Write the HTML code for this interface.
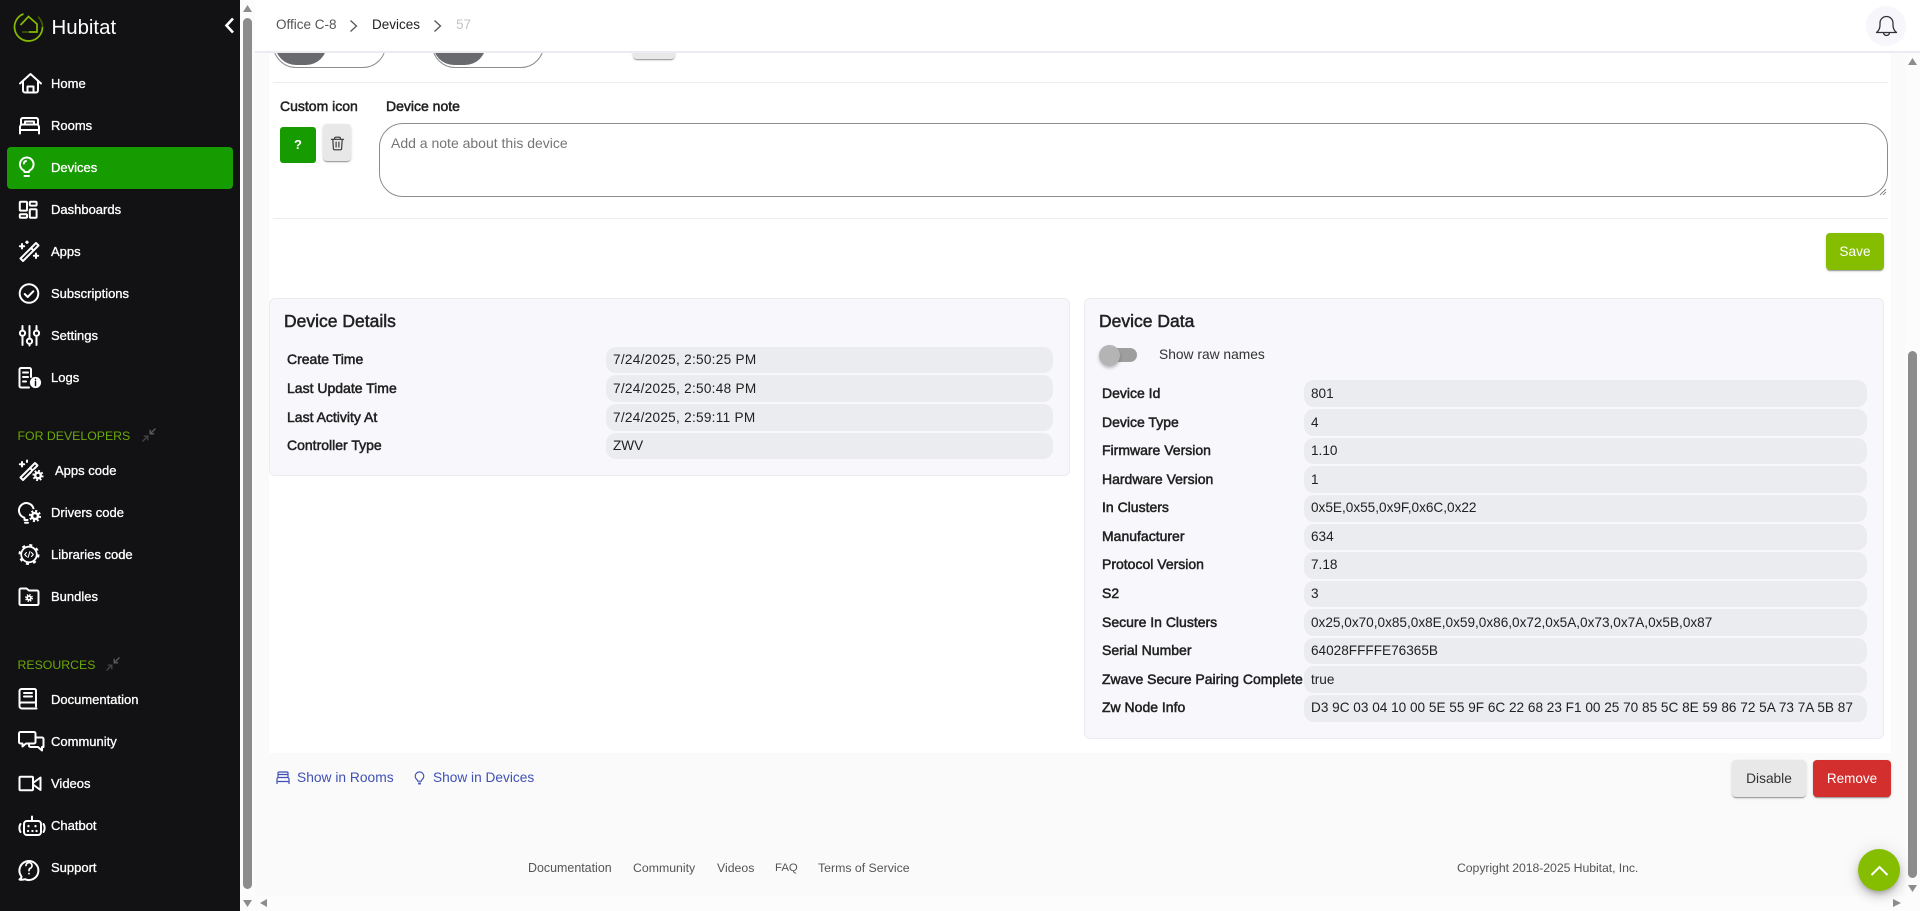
<!DOCTYPE html>
<html lang="en"><head><meta charset="utf-8"><title>Hubitat</title>
<style>
html,body{margin:0;padding:0;width:1920px;height:911px;overflow:hidden;background:#fff;font-family:"Liberation Sans",sans-serif;color:#212121}
*{box-sizing:border-box}
.a{position:absolute}
.t{position:absolute;white-space:nowrap;line-height:20px;height:20px}
.side{position:absolute;left:0;top:0;width:240px;height:911px;background:#121214}
.n{color:#fff;font-size:13px;-webkit-text-stroke:.3px #fff}
.g{color:#6aa806;font-size:12.3px}
.l{font-size:14px;-webkit-text-stroke:.5px #212121;color:#212121}
.v{font-size:13.6px;color:#212121}
.d{letter-spacing:.28px}
.p{position:absolute;background:#ebecf0;border-radius:10px}
.h{font-size:17.5px;-webkit-text-stroke:.5px #212121}
.sh{box-shadow:0 2px 1px -1px rgba(0,0,0,.25),0 1px 1px rgba(0,0,0,.14),0 1px 3px rgba(0,0,0,.12)}
svg{position:absolute;overflow:visible}
.ic{fill:none;stroke:#fff;stroke-width:2;stroke-linecap:round;stroke-linejoin:round}
.f{font-size:12.3px;color:#555}
.b{position:absolute;border-radius:4px;font-size:13.7px;text-align:center}
</style></head><body>

<!-- main bg -->
<div class="a" style="left:240px;top:0;width:15px;height:911px;background:#fcfcfc"></div>
<div class="a" style="left:255px;top:53px;width:1650px;height:843px;background:#fafafa"></div>
<div class="a" style="left:255px;top:896px;width:1665px;height:15px;background:#fcfcfc"></div>
<div class="a" style="left:1905px;top:53px;width:15px;height:858px;background:#fcfcfc"></div>
<div class="a" style="left:269px;top:53px;width:1622px;height:700px;background:#fff"></div>

<!-- clipped toggles -->
<div class="a" style="left:273px;top:22px;width:113px;height:45.5px;border:1px solid #8c8c8c;border-radius:24px;background:#fff"></div>
<div class="a" style="left:275px;top:23px;width:52px;height:42px;border-radius:24px;background:#696a6e"></div>
<div class="a" style="left:432px;top:22px;width:112px;height:45.5px;border:1px solid #8c8c8c;border-radius:24px;background:#fff"></div>
<div class="a sh" style="left:433px;top:23px;width:53px;height:42px;border-radius:24px;background:#696a6e;box-shadow:none"></div>
<div class="a sh" style="left:633px;top:30px;width:42px;height:29px;border-radius:4px;background:#e8e8e8"></div>

<div class="a" style="left:273px;top:82px;width:1615px;height:1px;background:#ebebf0"></div>
<div class="t l" style="left:280px;top:96px">Custom icon</div>
<div class="t l" style="left:386px;top:96px">Device note</div>
<div class="a" style="left:280px;top:127px;width:36px;height:36px;background:#169b00;border-radius:3px;color:#fff;font-size:13px;font-weight:bold;text-align:center;line-height:36px">?</div>
<div class="a sh" style="left:323px;top:124px;width:28px;height:37px;background:#e8e8e8;border-radius:4px"></div>
<svg style="left:329.500px;top:135.500px" width="15" height="15" viewBox="0 0 16 16" fill="none" stroke="#333" stroke-width="1.2" stroke-linejoin="round" stroke-linecap="round"><path d="M1.5 3.5H14.5M5 3.5V2.2A1 1 0 0 1 6 1.2H10A1 1 0 0 1 11 2.2V3.5M3 3.5L3.6 13.5A1.2 1.2 0 0 0 4.8 14.7H11.2A1.2 1.2 0 0 0 12.4 13.5L13 3.5M6.5 6.5V11.8M9.5 6.5V11.8"/></svg>

<div class="a" style="left:379px;top:123px;width:1509px;height:74px;border:1px solid #8c8c8c;border-radius:24px;background:#fff"></div>
<div class="t" style="left:391px;top:133px;font-size:14px;color:#757575">Add a note about this device</div>
<svg style="left:1879px;top:188px" width="8" height="8" stroke="#666" stroke-width=".8"><path d="M1 7L7 1M4 7L7 4"/></svg>
<div class="a" style="left:273px;top:218px;width:1615px;height:1px;background:#ebebf0"></div>
<div class="b sh" style="left:1826px;top:233px;width:58px;height:37px;background:#85bd00;color:#fff;line-height:37px">Save</div>

<!-- Device Details -->
<div class="a" style="left:269px;top:298px;width:801px;height:178px;background:#f7f7fc;border:1px solid #ebebf0;border-radius:6px"></div>
<div class="t h" style="left:284px;top:311px">Device Details</div>
<div class="p" style="left:606px;top:347px;width:447px;height:26px"></div>
<div class="p" style="left:606px;top:375px;width:447px;height:27px"></div>
<div class="p" style="left:606px;top:404px;width:447px;height:27px"></div>
<div class="p" style="left:606px;top:433px;width:447px;height:26px"></div>
<div class="t l" style="left:287px;top:349px">Create Time</div><div class="t v d" style="left:613px;top:350px">7/24/2025, 2:50:25 PM</div>
<div class="t l" style="left:287px;top:378px">Last Update Time</div><div class="t v d" style="left:613px;top:379px">7/24/2025, 2:50:48 PM</div>
<div class="t l" style="left:287px;top:407px">Last Activity At</div><div class="t v d" style="left:613px;top:408px">7/24/2025, 2:59:11 PM</div>
<div class="t l" style="left:287px;top:435px">Controller Type</div><div class="t v" style="left:613px;top:436px">ZWV</div>

<!-- Device Data -->
<div class="a" style="left:1084px;top:298px;width:800px;height:441px;background:#f7f7fc;border:1px solid #ebebf0;border-radius:6px"></div>
<div class="t h" style="left:1099px;top:311px">Device Data</div>
<div class="a" style="left:1100px;top:348px;width:37px;height:14px;border-radius:7px;background:#9e9e9e"></div>
<div class="a" style="left:1099px;top:345px;width:21px;height:21px;border-radius:50%;background:#b4b4b4;box-shadow:0 2px 3px rgba(0,0,0,.25)"></div>
<div class="t" style="left:1159px;top:345px;font-size:13.8px;color:#333">Show raw names</div>

<div class="p" style="left:1304px;top:380px;width:563px;height:27px"></div>
<div class="p" style="left:1304px;top:409px;width:563px;height:27px"></div>
<div class="p" style="left:1304px;top:438px;width:563px;height:26px"></div>
<div class="p" style="left:1304px;top:466px;width:563px;height:27px"></div>
<div class="p" style="left:1304px;top:495px;width:563px;height:27px"></div>
<div class="p" style="left:1304px;top:524px;width:563px;height:26px"></div>
<div class="p" style="left:1304px;top:552px;width:563px;height:27px"></div>
<div class="p" style="left:1304px;top:581px;width:563px;height:26px"></div>
<div class="p" style="left:1304px;top:609px;width:563px;height:27px"></div>
<div class="p" style="left:1304px;top:638px;width:563px;height:26px"></div>
<div class="p" style="left:1304px;top:666px;width:563px;height:27px"></div>
<div class="p" style="left:1304px;top:695px;width:563px;height:27px"></div>

<div class="t l" style="left:1102px;top:383px">Device Id</div><div class="t v" style="left:1311px;top:384px">801</div>
<div class="t l" style="left:1102px;top:412px">Device Type</div><div class="t v" style="left:1311px;top:413px">4</div>
<div class="t l" style="left:1102px;top:440px">Firmware Version</div><div class="t v" style="left:1311px;top:441px">1.10</div>
<div class="t l" style="left:1102px;top:469px">Hardware Version</div><div class="t v" style="left:1311px;top:470px">1</div>
<div class="t l" style="left:1102px;top:497px">In Clusters</div><div class="t v" style="left:1311px;top:498px">0x5E,0x55,0x9F,0x6C,0x22</div>
<div class="t l" style="left:1102px;top:526px">Manufacturer</div><div class="t v" style="left:1311px;top:527px">634</div>
<div class="t l" style="left:1102px;top:554px">Protocol Version</div><div class="t v" style="left:1311px;top:555px">7.18</div>
<div class="t l" style="left:1102px;top:583px">S2</div><div class="t v" style="left:1311px;top:584px">3</div>
<div class="t l" style="left:1102px;top:612px">Secure In Clusters</div><div class="t v" style="left:1311px;top:613px">0x25,0x70,0x85,0x8E,0x59,0x86,0x72,0x5A,0x73,0x7A,0x5B,0x87</div>
<div class="t l" style="left:1102px;top:640px">Serial Number</div><div class="t v" style="left:1311px;top:641px">64028FFFFE76365B</div>
<div class="t l" style="left:1102px;top:669px">Zwave Secure Pairing Complete</div><div class="t v" style="left:1311px;top:670px">true</div>
<div class="t l" style="left:1102px;top:697px">Zw Node Info</div><div class="t v" style="left:1311px;top:698px">D3 9C 03 04 10 00 5E 55 9F 6C 22 68 23 F1 00 25 70 85 5C 8E 59 86 72 5A 73 7A 5B 87</div>

<!-- links -->
<svg style="left:275px;top:770px" width="16" height="16" viewBox="0 0 16 16" fill="none" stroke="#3f51b5" stroke-width="1.2"><path d="M3 7V3A1 1 0 0 1 4 2H12A1 1 0 0 1 13 3V7M2 14V9A1.5 1.5 0 0 1 3.5 7.5H12.5A1.5 1.5 0 0 1 14 9V14M2 11.5H14M3.500 4.500H12.500"/></svg>
<div class="t" style="left:297px;top:768px;font-size:13.8px;color:#3f51b5">Show in Rooms</div>
<svg style="left:413px;top:769px" width="13" height="17" viewBox="0 0 14 16" fill="none" stroke="#3f51b5" stroke-width="1.2"><path d="M4.5 10.5A4.6 4.6 0 1 1 9.5 10.5L9 12H5Z"/><path d="M5.5 14.5H8.5" stroke-width="2"/></svg>
<div class="t" style="left:433px;top:768px;font-size:13.7px;color:#3f51b5">Show in Devices</div>
<div class="b sh" style="left:1732px;top:760px;width:74px;height:37px;background:#e8e8e8;color:#333;line-height:37px">Disable</div>
<div class="b sh" style="left:1813px;top:760px;width:78px;height:37px;background:#d32f2f;color:#fff;line-height:37px;font-size:13.5px">Remove</div>

<div class="t f" style="left:528px;top:858px;font-size:12.45px">Documentation</div>
<div class="t f" style="left:633px;top:858px">Community</div>
<div class="t f" style="left:717px;top:858px">Videos</div>
<div class="t f" style="left:775px;top:858px;font-size:11.4px">FAQ</div>
<div class="t f" style="left:818px;top:858px">Terms of Service</div>
<div class="t f" style="left:1457px;top:858px;letter-spacing:-.08px">Copyright 2018-2025 Hubitat, Inc.</div>

<!-- FAB -->
<div class="a" style="left:1858px;top:849px;width:42px;height:42px;border-radius:50%;background:#85bd00;box-shadow:0 3px 5px -1px rgba(0,0,0,.2),0 6px 10px rgba(0,0,0,.14),0 1px 18px rgba(0,0,0,.12)"></div>
<svg style="left:1870px;top:865px" width="19" height="11" fill="none" stroke="#fff" stroke-width="2"><path d="M1.5 10L9.5 2L17.5 10"/></svg>

<!-- scrollbars -->
<div class="a" style="left:243px;top:18px;width:9px;height:871px;border-radius:5px;background:#8c8c8c"></div>
<div class="a" style="left:1908px;top:351px;width:9px;height:527px;border-radius:5px;background:#8c8c8c"></div>
<svg style="left:0;top:0" width="1920" height="911" fill="#8c8c8c"><path d="M243 12L247.5 5L252 12ZM243 900L252 900L247.5 907ZM1908 65L1912.5 58L1917 65ZM1908 885L1917 885L1912.5 892ZM267 899V907L260 903ZM1893 899V907L1901 903Z"/></svg>

<!-- topbar -->
<div class="a" style="left:255px;top:0;width:1665px;height:53px;background:#fff;border-bottom:2px solid #ebebf0"></div>
<div class="t" style="left:276px;top:15px;font-size:13.5px;color:#555">Office C-8</div>
<svg style="left:349px;top:19px" width="10" height="14" fill="none" stroke="#555" stroke-width="1.3"><path d="M1.5 1.5L7.5 7L1.5 12.5"/></svg>
<div class="t" style="left:372px;top:15px;font-size:13.5px;color:#222">Devices</div>
<svg style="left:433px;top:19px" width="10" height="14" fill="none" stroke="#555" stroke-width="1.3"><path d="M1.5 1.5L7.5 7L1.5 12.5"/></svg>
<div class="t" style="left:456px;top:15px;font-size:13.5px;color:#c4c4c4">57</div>
<div class="a" style="left:1866px;top:6px;width:40px;height:40px;border-radius:50%;background:#f6f6fb"></div>
<svg style="left:1875px;top:15px" width="23" height="23" viewBox="0 0 23 23" fill="none" stroke="#333" stroke-width="1.3" stroke-linejoin="round"><path d="M1.5 17.5C3.5 16 5 14 5 10V8A6.5 6.5 0 0 1 18 8V10C18 14 19.5 16 21.5 17.5ZM8.5 17.5A3 3 0 0 0 14.5 17.5"/></svg>

<!-- sidebar -->
<div class="side"></div>
<svg style="left:0;top:0" width="60" height="50" fill="none" stroke="#85bd00" stroke-width="1.7">
<path d="M23.5 13.9A14 14 0 1 0 42.5 27"/><path d="M42.500 27A14 14 0 0 0 38 16.700" stroke="#3d5a00"/><path d="M20.500 25L28.500 16.500L37 24V32H29"/><path d="M29 32H22" stroke="#3d5a00"/></svg>
<div class="t" style="left:51.500px;top:18px;font-size:20.4px;color:#fff">Hubitat</div>
<svg style="left:224px;top:17px" width="11" height="17" fill="none" stroke="#fff" stroke-width="2.6"><path d="M9 1.5L2.5 8.5L9 15.5"/></svg>

<div class="a" style="left:7px;top:147px;width:226px;height:42px;border-radius:4px;background:#169b00"></div>

<div class="t n" style="left:51px;top:74px">Home</div>
<div class="t n" style="left:51px;top:116px">Rooms</div>
<div class="t n" style="left:51px;top:158px">Devices</div>
<div class="t n" style="left:51px;top:200px">Dashboards</div>
<div class="t n" style="left:51px;top:242px">Apps</div>
<div class="t n" style="left:51px;top:284px">Subscriptions</div>
<div class="t n" style="left:51px;top:326px">Settings</div>
<div class="t n" style="left:51px;top:368px">Logs</div>

<div class="t g" style="left:17.500px;top:426px">FOR DEVELOPERS</div>
<div class="t n" style="left:55px;top:461px">Apps code</div>
<div class="t n" style="left:51px;top:503px">Drivers code</div>
<div class="t n" style="left:51px;top:545px">Libraries code</div>
<div class="t n" style="left:51px;top:587px">Bundles</div>
<div class="t g" style="left:17.500px;top:655px">RESOURCES</div>
<div class="t n" style="left:51px;top:690px">Documentation</div>
<div class="t n" style="left:51px;top:732px">Community</div>
<div class="t n" style="left:51px;top:774px">Videos</div>
<div class="t n" style="left:51px;top:816px">Chatbot</div>
<div class="t n" style="left:51px;top:858px">Support</div>

<svg style="left:0;top:0" width="240" height="911" class="ic">
<!-- home -->
<path d="M20 83.5L30.5 74L41 83.5M23 81.5V90.5A2 2 0 0 0 25 92.5H36A2 2 0 0 0 38 90.5V81.5M27.5 92.5V86.5H33.5V92.5"/>
<!-- rooms -->
<path d="M21 124V119.5A2 2 0 0 1 23 118H36A2 2 0 0 1 38 119.5V124M20 133.5V127A2.5 2.5 0 0 1 22.5 124.5H36.5A2.5 2.5 0 0 1 39 127V133.5M20 130H39M25 124V121.500H34V124"/>
<!-- bulb -->
<path d="M24 170.500A6.800 6.800 0 1 1 29.500 170.500L29 172H24.500ZM24.500 176H29M23.800 163.500A3 3 0 0 1 26 161"/>
<!-- dash -->
<rect x="19.8" y="201.8" width="7.2" height="8.800" rx="1"/><rect x="19.8" y="214.2" width="7.2" height="3.6" rx="1"/><rect x="29.8" y="201.8" width="6.800" height="3.800" rx="1"/><rect x="29.8" y="209.200" width="6.800" height="8.600" rx="1"/>
<!-- apps -->
<path d="M20.5 258.5L36 243L38.5 245.5L23 261ZM31 248L33.5 250.5M22 244V248.5M19.8 246.2H24.2M36 253.5V258M33.8 255.8H38.2M27 241.5V243M26.2 242.2H27.8"/>
<!-- subs -->
<circle cx="29" cy="293.5" r="9.3"/><path d="M24.7 294L27.7 297L33.3 291.3"/>
<!-- settings -->
<path d="M22.5 326V330.5M22.5 336V345M29.5 326V338.5M29.5 344V345.5M36.5 326V330.5M36.5 336V345"/><circle cx="22.5" cy="333.2" r="2.6"/><circle cx="29.5" cy="341.2" r="2.6"/><circle cx="36.5" cy="333.2" r="2.6"/>
<!-- logs -->
<path d="M31 377V369.5A1.5 1.5 0 0 0 29.5 368H21A1.5 1.5 0 0 0 19.5 369.5V386A1.5 1.5 0 0 0 21 387.5H29M23 372.5H28M23 377H28M23 381.5H26"/>
<circle cx="35.5" cy="382.5" r="5.6" fill="#fff" stroke="none"/><path d="M35.5 381.5V385.5M35.5 379.3V379.6" stroke="#121214" stroke-width="1.5"/>
<!-- apps code -->
<path d="M20.5 477.5L35 463L37.5 465.5L23 480ZM30 468L32.5 470.5M22 462V466.5M19.8 464.2H24.2M27 460.5V462"/>
<circle cx="38" cy="475.500" r="6.800" fill="#121214" stroke="none"/>
<circle cx="38" cy="475.500" r="4" fill="#fff" stroke="none"/><circle cx="38" cy="475.500" r="4.600" fill="none" stroke-width="2" stroke-linecap="butt" stroke-dasharray="1.800 1.810"/><circle cx="38" cy="475.500" r="1.600" fill="#121214" stroke="none"/>
<!-- drivers code -->
<path d="M24 517.500A7.400 7.400 0 1 1 33.500 508.500M24.500 518V520H27.500M25 522.800H28"/>
<circle cx="35" cy="516" r="7" fill="#121214" stroke="none"/>
<circle cx="35" cy="516" r="4.300" fill="#fff" stroke="none"/><circle cx="35" cy="516" r="5" fill="none" stroke-width="2.200" stroke-linecap="butt" stroke-dasharray="2 1.930"/><circle cx="35" cy="516" r="1.700" fill="#121214" stroke="none"/>
<!-- libraries -->
<circle cx="29" cy="554.5" r="7.8" stroke-width="1.8"/><circle cx="29" cy="554.5" r="9.4" stroke-width="2.2" stroke-linecap="butt" stroke-dasharray="3 4.380"/>
<path d="M26.5 552.5L24.7 554.5L26.5 556.5M31.5 552.5L33.3 554.5L31.5 556.5M30 551.5L28 557.5" stroke-width="1.1"/>
<!-- bundles -->
<path d="M19.5 604A1.5 1.5 0 0 0 21 605H37A1.5 1.5 0 0 0 38.5 604V592A1.5 1.5 0 0 0 37 590.5H29L26.5 588.5H21A1.5 1.5 0 0 0 19.5 590Z"/>
<circle cx="29" cy="598" r="2.700" fill="#fff" stroke="none"/><circle cx="29" cy="598" r="3.200" fill="none" stroke-width="1.600" stroke-linecap="butt" stroke-dasharray="1.300 1.210"/><circle cx="29" cy="598" r="1" fill="#121214" stroke="none"/>
<!-- docs -->
<path d="M36 706.5V690.5A1.5 1.5 0 0 0 34.5 689H21.5A2 2 0 0 0 19.5 691V706A2.5 2.5 0 0 0 22 708.5H36.5M19.5 704A2 2 0 0 1 21.5 702.5H36M24 693H32M24 696.5H32" />
<!-- community -->
<path d="M20.5 732H34A1.5 1.5 0 0 1 35.5 733.5V742A1.5 1.5 0 0 1 34 743.5H26L22.5 746.5V743.5H20.5A1.5 1.5 0 0 1 19 742V733.5A1.5 1.5 0 0 1 20.5 732Z"/>
<path d="M36 737.5H42A1.5 1.5 0 0 1 43.5 739V747H42V750.5L38 747H30.5A1.5 1.5 0 0 1 29 745.5V744"/>
<!-- videos -->
<rect x="19.5" y="776.8" width="13.5" height="13.5" rx="1"/><path d="M33 783L40.5 777.5V790L33 784.5"/>
<!-- chatbot -->
<rect x="24" y="821" width="17" height="14" rx="3"/><path d="M32 816.500V821M20.500 824C19 826 19 830 20.500 832M43.500 824C45 826 45 830 43.500 832"/>
<path d="M28.500 826V826.300M35.500 826V826.300M28 831H28.100M32.400 831H32.500M36.500 831H36.600" stroke-width="2.200"/>
<!-- support -->
<path d="M21.5 876.5A9.5 9.5 0 1 1 25 879.2C24 879.5 21 880 19.5 879.5C20.8 878.8 21.4 877.8 21.5 876.5Z"/>
<path d="M26 865.5A3 3 0 1 1 30.3 868.3C29.2 868.9 29 869.6 29 870.6M29 873.5V873.8" stroke-width="1.7"/>
</svg>

<!-- compress icons -->
<svg style="left:142px;top:428px" width="14" height="14" stroke="#5a5a5a" stroke-width="1.4" fill="none"><path d="M13.5.5L8.5 5.5M8.2 1.8V5.8H12.2" /><path d="M.5 13.5L5.5 8.5M1.8 8.2H5.8V12.2" stroke="#444"/></svg>
<svg style="left:105.500px;top:657px" width="14" height="14" stroke="#5a5a5a" stroke-width="1.4" fill="none"><path d="M13.5.5L8.5 5.5M8.2 1.8V5.8H12.2"/><path d="M.5 13.5L5.5 8.5M1.8 8.2H5.8V12.2" stroke="#444"/></svg>
</body></html>
